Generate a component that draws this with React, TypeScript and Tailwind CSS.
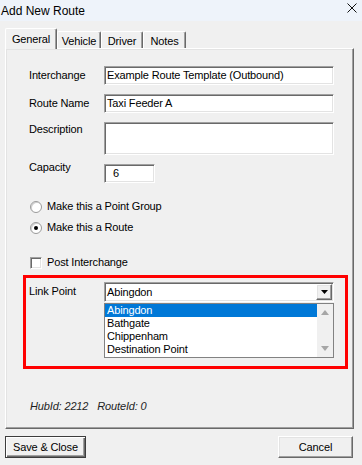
import React from "react";

const raised =
  "border border-t-white border-l-white border-r-[#696969] border-b-[#696969] shadow-[inset_-1px_-1px_0_#a0a0a0,inset_1px_1px_0_#e3e3e3]";
const sunken =
  "border border-t-[#a0a0a0] border-l-[#a0a0a0] border-r-white border-b-white shadow-[inset_1px_1px_0_#696969,inset_-1px_-1px_0_#e3e3e3]";

const tabs = [
  { name: "General", w: "w-[52px]" },
  { name: "Vehicle", w: "w-[44px]" },
  { name: "Driver", w: "w-[42px]" },
  { name: "Notes", w: "w-[43px]" },
];

const linkPoints = ["Abingdon", "Bathgate", "Chippenham", "Destination Point"];

function Field({ label, value, labelClass, boxClass }: { label: string; value: string; labelClass: string; boxClass: string }) {
  return (
    <div className="flex items-start">
      <span className={`w-[75px] leading-[13px] ${labelClass}`}>{label}</span>
      <div className={`bg-white pl-[2px] leading-[17px] ${sunken} ${boxClass}`}>{value}</div>
    </div>
  );
}

export default function App() {
  return (
    <div className="flex h-[465px] w-[362px] flex-col overflow-hidden bg-[#f0f0f0] font-['Liberation_Sans',Arial,sans-serif] text-[11px] tracking-[-0.15px] text-black">
      {/* title bar */}
      <div className="flex h-[21px] items-center justify-between bg-[#eef3fa] pl-[1px] pr-[5px]">
        <span className="text-[12px] leading-[14px] tracking-normal">Add New Route</span>
        <svg width="10" height="10" viewBox="0 0 10 10" className="mb-[5px]">
          <path d="M0.5 0.5 L9.5 9.5 M9.5 0.5 L0.5 9.5" stroke="#111" strokeWidth="1" />
        </svg>
      </div>

      {/* tab strip */}
      <div className="flex h-[27px] items-end pl-[5px]">
        {tabs.map((t, i) =>
          i === 0 ? (
            <div
              key={t.name}
              className={`relative z-10 -mb-px flex h-[21px] items-start justify-center rounded-t-[2px] border-l border-t border-r border-l-white border-t-white border-r-[#696969] bg-[#f0f0f0] pt-[4px] leading-[13px] shadow-[inset_-1px_0_0_#a0a0a0] ${t.w}`}
            >
              {t.name}
            </div>
          ) : (
            <div
              key={t.name}
              className={`flex h-[17px] items-start justify-center rounded-t-[2px] border-l border-t border-r border-l-white border-t-white border-r-[#696969] pt-[3px] leading-[13px] shadow-[inset_-1px_0_0_#a0a0a0] ${t.w}`}
            >
              {t.name}
            </div>
          )
        )}
      </div>

      {/* tab page */}
      <div className={`ml-[5px] flex h-[381px] w-[349px] flex-col pl-[23px] ${raised}`}>
        <div className="mt-[17px]">
          <Field label="Interchange" value="Example Route Template (Outbound)" labelClass="mt-[3px]" boxClass="h-[19px] w-[230px]" />
        </div>
        <div className="mt-[9px]">
          <Field label="Route Name" value="Taxi Feeder A" labelClass="mt-[3px]" boxClass="h-[19px] w-[230px]" />
        </div>
        <div className="mt-[9px]">
          <Field label="Description" value="" labelClass="mt-[1px]" boxClass="h-[33px] w-[230px]" />
        </div>
        <div className="mt-[9px]">
          <Field label="Capacity" value="6" labelClass="-mt-[3px]" boxClass="h-[19px] w-[51px] !pl-[8px]" />
        </div>

        {/* radios */}
        <div className="mt-[17px] flex h-[13px] items-center">
          <span className="ml-[1px] h-[12px] w-[12px] rounded-full border border-[#9a9a9a] bg-white shadow-[inset_1px_1px_0_#d0d0d0]" />
          <span className="ml-[5px] leading-[13px]">Make this a Point Group</span>
        </div>
        <div className="mt-[8px] flex h-[13px] items-center">
          <span className="ml-[1px] flex h-[12px] w-[12px] items-center justify-center rounded-full border border-[#9a9a9a] bg-white shadow-[inset_1px_1px_0_#d0d0d0]">
            <span className="h-[4px] w-[4px] rounded-full bg-black" />
          </span>
          <span className="ml-[5px] leading-[13px]">Make this a Route</span>
        </div>

        {/* checkbox */}
        <div className="mt-[22px] flex h-[13px] items-center">
          <span className={`ml-[1px] h-[12px] w-[12px] bg-white ${sunken}`} />
          <span className="ml-[5px] leading-[13px]">Post Interchange</span>
        </div>

        {/* link point */}
        <div className="-ml-[6px] mt-[6px] flex h-[94px] w-[325px] items-start border-[3px] border-[#ff0000] pl-[3px] pt-[4px]">
          <span className="mt-[3px] w-[75px] leading-[13px]">Link Point</span>
          <div className="flex w-[230px] flex-col">
            <div className={`flex h-[20px] items-center justify-between bg-white pl-[2px] ${sunken}`}>
              <span className="leading-[13px]">Abingdon</span>
              <div className={`mr-[1px] flex h-[16px] w-[16px] items-center justify-center bg-[#f0f0f0] ${raised}`}>
                <svg width="7" height="4" viewBox="0 0 7 4">
                  <path d="M0 0 H7 L3.5 4 Z" fill="#000" />
                </svg>
              </div>
            </div>
            <div className="mt-px flex h-[55px] border border-[#828282] bg-white">
              <div className="flex flex-1 flex-col">
                {linkPoints.map((p, i) => (
                  <div
                    key={p}
                    className={`h-[13px] pl-[2px] leading-[13px] ${i === 0 ? "bg-[#0078d7] text-white" : ""}`}
                  >
                    {p}
                  </div>
                ))}
              </div>
              <div className="flex w-[16px] flex-col justify-between bg-[#f0f0f0]">
                <div className="flex h-[17px] items-center justify-center">
                  <svg width="8" height="5" viewBox="0 0 8 5">
                    <path d="M0 5 H8 L4 0 Z" fill="#a6a6a6" />
                  </svg>
                </div>
                <div className="flex h-[17px] items-center justify-center">
                  <svg width="8" height="5" viewBox="0 0 8 5">
                    <path d="M0 0 H8 L4 5 Z" fill="#a6a6a6" />
                  </svg>
                </div>
              </div>
            </div>
          </div>
        </div>

        {/* ids */}
        <div className="ml-[1px] mt-[31px] flex leading-[13px] italic text-[#1e1e1e]">
          <span>HubId: 2212</span>
          <span className="ml-[9px]">RouteId: 0</span>
        </div>
      </div>

      {/* buttons */}
      <div className="mt-[7px] flex justify-between pl-[5px] pr-[9px]">
        <button className="flex h-[22px] w-[81px] items-center justify-center border border-[#3c3c3c] bg-[#f0f0f0] shadow-[inset_1px_1px_0_#fff,inset_-1px_-1px_0_#696969,inset_-2px_-2px_0_#a0a0a0] leading-[13px]">
          Save &amp; Close
        </button>
        <button className={`flex h-[22px] w-[75px] items-center justify-center bg-[#f0f0f0] leading-[13px] ${raised}`}>
          Cancel
        </button>
      </div>
    </div>
  );
}
